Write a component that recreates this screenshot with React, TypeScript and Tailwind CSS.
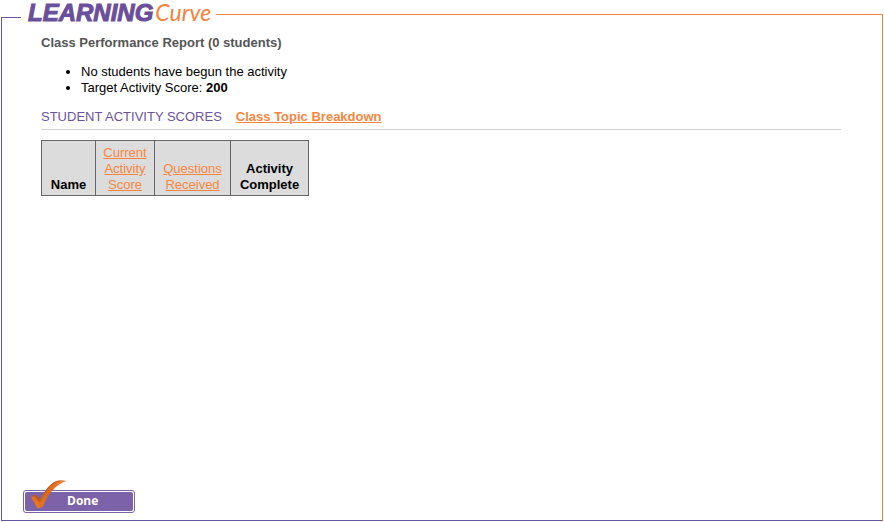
import React from 'react';

function Header() {
  return (
    <header className="flex h-[26px]">
      <div className="mt-[17px] w-5 border-l border-t border-[#6b549e]" />
      <h1 className="flex w-[195px] items-baseline whitespace-nowrap pl-[7px] italic leading-6">
        <span className="font-['Liberation_Sans',Arial,sans-serif] text-[24px] leading-6 font-bold text-[#6a4f9b] [-webkit-text-stroke:1px_#6a4f9b]">LEARNING</span>
        <span className="pl-0.5 font-['Lato',sans-serif] text-[23px] leading-[25px] font-normal text-[#f6823c]">Curve</span>
      </h1>
      <div className="mt-[14px] flex-1 border-r border-t border-[#f6863f]" />
    </header>
  );
}

function ScoreTable() {
  const cell = 'border border-[#666] pt-1 pb-0.5 align-bottom';
  const sort = 'text-[#f6863f] underline';
  return (
    <table className="mt-[10px] w-[268px] table-fixed border-collapse bg-[#dcdcdc] text-center text-[13px] leading-4">
      <colgroup>
        <col className="w-[54px]" />
        <col className="w-[59px]" />
        <col className="w-[76px]" />
        <col className="w-[78px]" />
      </colgroup>
      <thead>
        <tr>
          <th scope="col" className={`${cell} font-bold`}>Name</th>
          <th scope="col" className={`${cell} font-normal`}>
            <a href="#current" className={sort}>Current<br />Activity<br />Score</a>
          </th>
          <th scope="col" className={`${cell} font-normal`}>
            <a href="#questions" className={sort}>Questions<br />Received</a>
          </th>
          <th scope="col" className={`${cell} font-bold`}>Activity<br />Complete</th>
        </tr>
      </thead>
    </table>
  );
}

function DoneButton() {
  return (
    <button type="button" className="relative h-[23px] w-28 rounded-[3px] border border-[#7c62a9] bg-white p-px">
      <span className="flex h-full items-center rounded-[2px] bg-[#7c62a9] pb-0.5 pl-[42px] font-['Open_Sans',sans-serif] text-[12px] font-bold leading-4 text-white">
        Done
      </span>
      <svg aria-hidden="true" viewBox="0 0 37 30" className="absolute -top-[11px] left-[7px] h-[30px] w-[37px]">
        <defs>
          <linearGradient id="tick" x1="0" y1="1" x2="1" y2="0">
            <stop offset="0" stopColor="#ee7a20" />
            <stop offset="0.5" stopColor="#d9681c" />
            <stop offset="1" stopColor="#ee8238" />
          </linearGradient>
        </defs>
        <path d="M0 17L4.500 14.500L9 20C14 10 20 2 28 0.500Q32 -0.300 35.500 1C26 4 18 12 12 26.500L6.500 28.500Z" fill="url(#tick)" />
        <path d="M0 17L4.500 14.500L9 20L8 22L4 16.500Z" fill="#b9581b" />
        <path d="M9 20C14 10 20 2 28 0.500L30 0.800C20 3.500 14.500 11.500 9.500 22L8 22Z" fill="#c4601d" />
      </svg>
    </button>
  );
}

export default function App() {
  return (
    <div className="flex min-h-screen flex-col bg-white px-px pb-px font-['Liberation_Sans',Arial,sans-serif] text-[13px] leading-4 text-black">
      <Header />
      <main className="flex flex-1 flex-col border-x border-b border-b-[#6b549e] border-l-[#6b549e] border-r-[#f6863f] pb-[7px] pl-[21px] pr-[41px]">
        <section className="ml-[18px] mt-[9px]">
          <h2 className="font-bold text-[#555]">Class Performance Report (0 students)</h2>
          <ul className="mt-[13px] list-disc pl-10">
            <li>No students have begun the activity</li>
            <li>Target Activity Score: <b>200</b></li>
          </ul>
          <nav className="mt-[13px] flex gap-[14px] border-b border-[#d3d3d3] pb-1">
            <span className="text-[#6b549e]">STUDENT ACTIVITY SCORES</span>
            <a href="#topics" className="font-bold text-[#f6863f] underline">Class Topic Breakdown</a>
          </nav>
          <ScoreTable />
        </section>
        <div className="mt-auto flex">
          <DoneButton />
        </div>
      </main>
    </div>
  );
}
